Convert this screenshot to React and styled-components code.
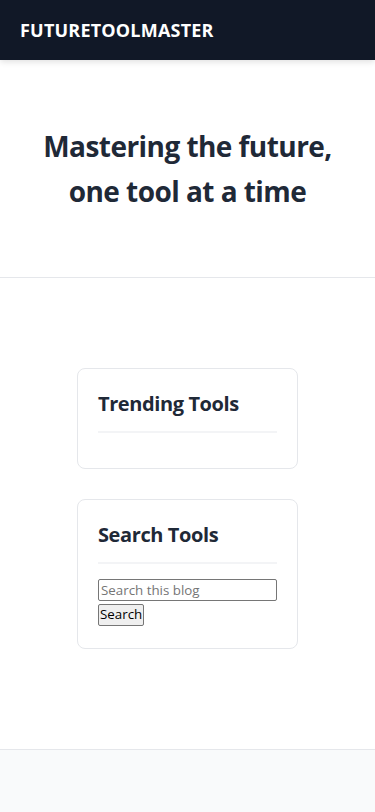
import React from "react";
import styled, { createGlobalStyle } from "styled-components";

const Global = createGlobalStyle`
  * { box-sizing: border-box; }
  html, body { margin: 0; padding: 0; background: #ffffff; }
  body { font-family: "Open Sans", "Noto Sans", sans-serif; color: #1f2937; }
`;

const Header = styled.header`
  height: 60px;
  background: #111827;
  display: flex;
  align-items: center;
  padding: 0 20px;
  box-shadow: 0 2px 6px rgba(0, 0, 0, 0.12);
  position: relative;
  z-index: 1;
`;

const Brand = styled.div`
  color: #ffffff;
  font-size: 18px;
  font-weight: 700;
  letter-spacing: 0.2px;
  text-transform: uppercase;
`;

const Hero = styled.section`
  padding: 64px 20px 63px;
  border-bottom: 1px solid #e5e7eb;
  text-align: center;
`;

const HeroTitle = styled.h1`
  margin: 0;
  font-size: 28px;
  line-height: 1.6;
  font-weight: 700;
  letter-spacing: -0.55px;
  color: #1f2937;
`;

const Main = styled.main`
  padding: 90px 0 100px;
  display: flex;
  flex-direction: column;
  align-items: center;
  gap: 30px;
`;

const Widget = styled.div`
  width: 221px;
  border: 1px solid #e5e7eb;
  border-radius: 8px;
  padding: 20px;
  background: #ffffff;
`;

const WidgetTitle = styled.h2`
  margin: 0 0 15px;
  font-size: 20px;
  line-height: 30px;
  font-weight: 700;
  letter-spacing: -0.4px;
  color: #1f2937;
  padding-bottom: 12px;
  border-bottom: 2px solid #f3f4f6;
`;

const SearchForm = styled.form`
  display: flex;
  flex-direction: column;
  align-items: flex-start;
  gap: 3px;
  padding: 0 0 2px;
`;

const SearchInput = styled.input`
  width: 179px;
  height: 22px;
  border: 1px solid #767676;
  border-radius: 2px;
  padding: 1px 2px;
  font-family: "Open Sans", sans-serif;
  font-size: 13.33px;
  color: #000;
  &::placeholder { color: #757575; }
`;

const SearchButton = styled.button`
  height: 22px;
  border: 1px solid #767676;
  border-radius: 2px;
  background: #efefef;
  padding: 0 1px;
  font-family: "Open Sans", sans-serif;
  font-size: 13.33px;
  color: #000;
  line-height: 1;
`;

const Footer = styled.footer`
  border-top: 1px solid #e5e7eb;
  background: #f9fafb;
  min-height: 100px;
`;

export default function App() {
  return (
    <>
      <Global />
      <Header>
        <Brand>FutureToolMaster</Brand>
      </Header>
      <Hero>
        <HeroTitle>
          Mastering the future,
          <br />
          one tool at a time
        </HeroTitle>
      </Hero>
      <Main>
        <Widget>
          <WidgetTitle>Trending Tools</WidgetTitle>
        </Widget>
        <Widget>
          <WidgetTitle>Search Tools</WidgetTitle>
          <SearchForm onSubmit={(e) => e.preventDefault()}>
            <SearchInput placeholder="Search this blog" />
            <SearchButton type="submit">Search</SearchButton>
          </SearchForm>
        </Widget>
      </Main>
      <Footer />
    </>
  );
}
